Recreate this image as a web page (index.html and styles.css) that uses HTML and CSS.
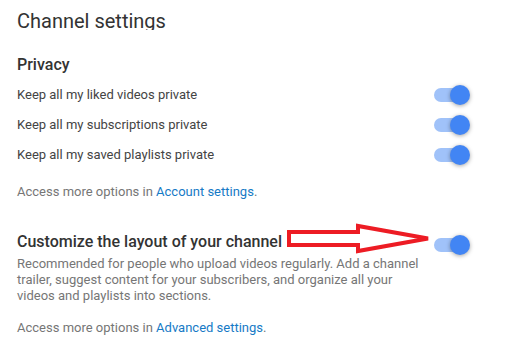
FILE: index.html
```html
<!DOCTYPE html>
<html lang="en">
<head>
<meta charset="UTF-8">
<meta name="viewport" content="width=device-width, initial-scale=1.0">
<title>Channel settings</title>
<link rel="stylesheet" href="styles.css">
</head>
<body>
<div class="page">
  <div class="title">Channel settings</div>

  <div class="section-title">Privacy</div>
  <div class="row">
    <span>Keep all my liked videos private</span>
    <div class="toggle"><div class="track"></div><div class="knob"></div></div>
  </div>
  <div class="row">
    <span>Keep all my subscriptions private</span>
    <div class="toggle"><div class="track"></div><div class="knob"></div></div>
  </div>
  <div class="row">
    <span>Keep all my saved playlists private</span>
    <div class="toggle"><div class="track"></div><div class="knob"></div></div>
  </div>
  <div class="more">Access more options in <a href="#">Account settings</a>.</div>

  <div class="layout">
    <div class="layout-text">
      <div class="section-title">Customize the layout of your channel</div>
      <div class="desc">Recommended for people who upload videos regularly. Add a channel trailer, suggest content for your subscribers, and organize all your videos and playlists into sections.</div>
    </div>
    <div class="toggle toggle-top"><div class="track"></div><div class="knob"></div></div>
  </div>
  <div class="more more-last">Access more options in <a href="#">Advanced settings</a>.</div>
</div>

<!-- red arrow drawn over the screenshot -->
<svg class="arrow" viewBox="285 222 148 34" width="148" height="34">
  <path d="M289 232 L358 232 L358 226 L428 238.5 L358 251 L358 245 L289 245 Z" fill="none" stroke="#ed1c24" stroke-width="4"/>
</svg>
</body>
</html>
```

FILE: styles.css
```css
body {
  font-family: Roboto, "Liberation Sans", Arial, sans-serif;
  background-color: #fff;
  margin: 0;
  padding: 0;
  position: relative;
}
.page {
  width: 453px;
  padding-left: 17px;
}
.title {
  margin-top: 9px;
  height: 21px;
  overflow: hidden;
  font-size: 20px;
  line-height: 24px;
  color: #333;
}
.section-title {
  font-size: 16px;
  font-weight: 500;
  line-height: 20px;
  color: #333;
}
.title + .section-title {
  margin-top: 25px;
}
.row {
  display: flex;
  justify-content: space-between;
  align-items: center;
  height: 30px;
  font-size: 13px;
  line-height: 18px;
  color: #444;
}
.section-title + .row {
  margin-top: 5px;
}
.toggle {
  position: relative;
  width: 36px;
  height: 20px;
  flex-shrink: 0;
}
.track {
  position: absolute;
  left: 0;
  top: 3px;
  width: 34px;
  height: 14px;
  border-radius: 7px;
  background-color: #a0c2f9;
}
.knob {
  position: absolute;
  right: 0;
  top: 0;
  width: 20px;
  height: 20px;
  border-radius: 50%;
  background-color: #4285f4;
  box-shadow: 0 1px 4px rgba(0, 0, 0, 0.35);
}
.more {
  margin-top: 13px;
  font-size: 13px;
  line-height: 18px;
  color: #767676;
}
.more a {
  color: #167ac6;
  text-decoration: none;
}
.layout {
  display: flex;
  justify-content: space-between;
  align-items: flex-start;
  margin-top: 31px;
}
.layout-text {
  width: 404px;
}
.desc {
  margin-top: 4px;
  font-size: 13px;
  line-height: 16px;
  color: #767676;
}
.toggle-top {
  margin-top: 3px;
}
.more-last {
  margin-top: 15px;
}
.arrow {
  position: absolute;
  left: 285px;
  top: 222px;
}
```
